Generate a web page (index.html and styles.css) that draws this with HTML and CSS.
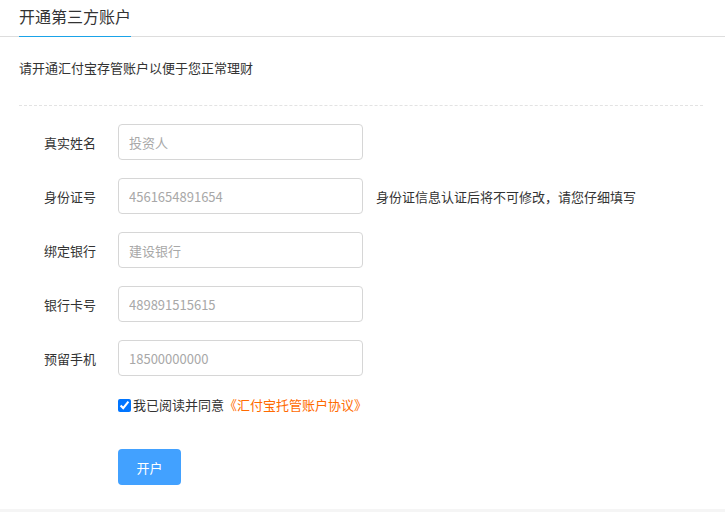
FILE: index.html
```html
<!DOCTYPE html>
<html lang="zh-CN">

<head>
    <meta charset="UTF-8">
    <meta name="viewport" content="width=device-width, initial-scale=1.0">
    <title>开通第三方账户</title>
    <link rel="stylesheet" href="styles.css">
</head>

<body>

    <div class="panel">

        <div class="panel-head">
            <span class="panel-title">开通第三方账户</span>
        </div>

        <p class="intro">请开通汇付宝存管账户以便于您正常理财</p>

        <form class="open-form" action="#" method="get">

            <div class="form-row">
                <label for="realname">真实姓名</label>
                <input type="text" id="realname" placeholder="投资人">
            </div>

            <div class="form-row">
                <label for="idcard">身份证号</label>
                <input type="text" id="idcard" placeholder="4561654891654">
                <span class="hint">身份证信息认证后将不可修改，请您仔细填写</span>
            </div>

            <div class="form-row">
                <label for="bank">绑定银行</label>
                <input type="text" id="bank" placeholder="建设银行">
            </div>

            <div class="form-row">
                <label for="cardno">银行卡号</label>
                <input type="text" id="cardno" placeholder="489891515615">
            </div>

            <div class="form-row">
                <label for="phone">预留手机</label>
                <input type="text" id="phone" placeholder="18500000000">
            </div>

            <div class="agree-row">
                <input type="checkbox" id="agree" checked>
                <label for="agree">我已阅读并同意</label>
                <a class="agree-link" href="#">《汇付宝托管账户协议》</a>
            </div>

            <div class="submit-row">
                <button type="submit">开户</button>
            </div>

        </form>

    </div>

</body>

</html>
```

FILE: styles.css
```css
body {
    margin: 0;
    background: #f5f5f5;
    color: #333;
    font-family: "Noto Sans CJK SC", "Microsoft YaHei", sans-serif;
    font-size: 13px;
}

.panel {
    height: 509px;
    background: #ffffff;
    box-sizing: border-box;
}

.panel-head {
    padding-left: 19px;
    border-bottom: 1px solid #dddddd;
}

.panel-title {
    display: inline-block;
    font-size: 16px;
    line-height: 22px;
    padding: 5px 0 9px;
    border-bottom: 1px solid #1aa3e8;
    margin-bottom: -1px;
}

.intro {
    margin: 0 22px 0 19px;
    padding: 22px 0 28px;
    line-height: 18px;
    border-bottom: 1px dashed #e3e3e3;
}

.open-form {
    padding: 18px 0 0 44px;
}

.form-row {
    display: flex;
    align-items: center;
    margin-bottom: 18px;
}

.form-row label {
    width: 52px;
    margin-right: 22px;
    white-space: nowrap;
}

.form-row input {
    width: 245px;
    height: 36px;
    box-sizing: border-box;
    padding: 0 10px;
    border: 1px solid #d6d6d6;
    border-radius: 4px;
    font-family: inherit;
    font-size: 13px;
    color: #333;
    outline: none;
}

.form-row input::placeholder {
    color: #a8a8a8;
}

.hint {
    margin-left: 13px;
}

.agree-row {
    display: flex;
    align-items: center;
    margin: 20px 0 0 74px;
    line-height: 18px;
}

.agree-row input {
    width: 13px;
    height: 13px;
    margin: 0 2px 0 0;
    accent-color: #0075ff;
}

.agree-link {
    color: #ff6a00;
    text-decoration: none;
}

.submit-row {
    margin: 35px 0 0 74px;
}

button {
    width: 63px;
    height: 36px;
    border: none;
    border-radius: 4px;
    background: #42a1ff;
    color: #ffffff;
    font-family: inherit;
    font-size: 13px;
    cursor: pointer;
}

button:hover {
    background: #66b1ff;
}
```
